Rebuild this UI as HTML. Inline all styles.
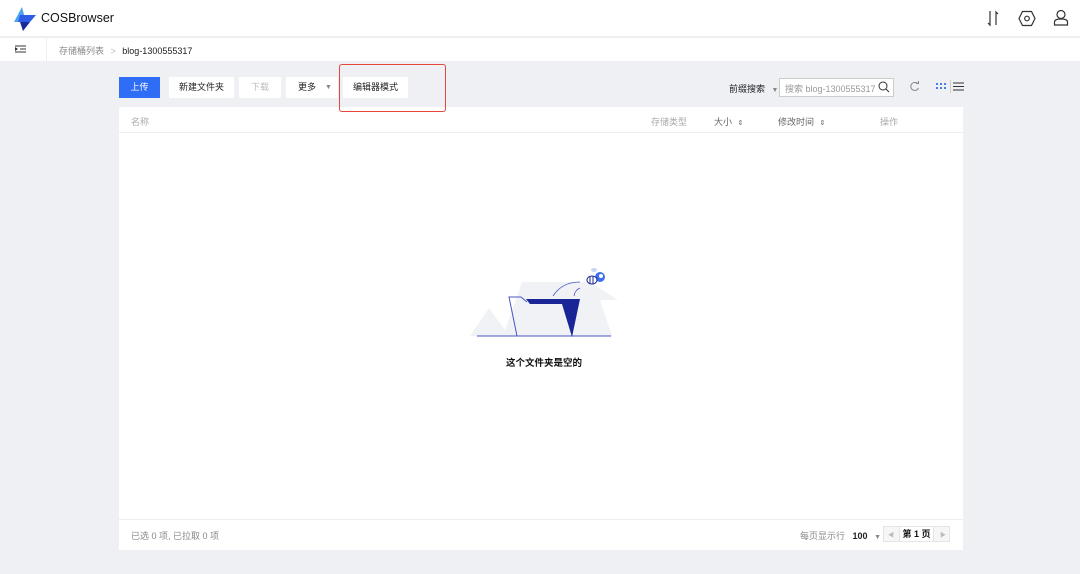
<!DOCTYPE html>
<html><head><meta charset="utf-8"><style>
*{margin:0;padding:0;box-sizing:border-box}
body{width:1080px;height:574px;background:#eef0f4;font-family:"Liberation Sans","Noto Sans CJK SC",sans-serif;font-size:9px;color:#222;position:relative;overflow:hidden}
.a{position:absolute}
.btn{position:absolute;top:77px;height:21px;background:#fff;font-size:9px;line-height:21px;text-align:center;color:#222}
</style></head><body>
<div class="a" style="left:0;top:0;width:1080px;height:37px;background:#fff;border-bottom:1px solid #eee"></div>
<svg class="a" style="left:12px;top:7px" width="26" height="24" viewBox="0 0 26 24"><polygon points="10,0 2,15 14,15" fill="#4aa3f0"/><polygon points="8,8 24,8 18,15 6,15" fill="#2e5ce6"/><polygon points="8,15 18,15 11,24" fill="#1a2a9a"/></svg>
<div class="a" style="left:41px;top:11px;font-size:12.5px;color:#111">COSBrowser</div>
<div class="a" style="left:0;top:38px;width:1080px;height:23px;background:#fff"></div>
<div class="a" style="left:46px;top:38px;width:1px;height:23px;background:#eee"></div>
<svg class="a" style="left:14px;top:44px" width="13" height="10"><path d="M1 2h11M6 5h6M1 8h11" stroke="#333" stroke-width="1"/><polygon points="1,3 4,5 1,7" fill="#333"/></svg>
<div class="a" style="left:59px;top:44px;color:#888">存储桶列表 <span style="color:#bbb;margin:0 4px">&gt;</span> <span style="color:#222">blog-1300555317</span></div>
<div class="btn" style="left:119px;width:41px;background:#2f6df6;color:#fff">上传</div>
<div class="btn" style="left:169px;width:65px">新建文件夹</div>
<div class="btn" style="left:239px;width:42px;color:#bbb">下载</div>
<div class="btn" style="left:286px;width:52px;text-align:left;padding-left:12px">更多<span class="a" style="left:39px;top:0;color:#888;font-size:7px">▼</span></div>
<div class="btn" style="left:343px;width:65px">编辑器模式</div>
<div class="a" style="left:729px;top:82px;color:#222">前缀搜索 <span style="color:#888;font-size:7px;margin-left:4px">▼</span></div>
<div class="a" style="left:779px;top:78px;width:115px;height:19px;background:#fff;border:1px solid #ccc;padding:3px 5px;color:#999">搜索 blog-1300555317</div>
<svg class="a" style="left:878px;top:81px" width="12" height="12"><circle cx="5" cy="5" r="4" fill="none" stroke="#333"/><path d="M8 8l3 3" stroke="#333"/></svg>
<svg class="a" style="left:909px;top:81px" width="11" height="11"><path d="M9 3A4 4 0 1 0 9.5 7" fill="none" stroke="#888"/><path d="M7 2.5h2.5V0" fill="none" stroke="#888"/></svg>
<svg class="a" style="left:936px;top:83px" width="10" height="7"><g fill="#4a7cf0"><rect x="0" y="0" width="2" height="2"/><rect x="4" y="0" width="2" height="2"/><rect x="8" y="0" width="2" height="2"/><rect x="0" y="4" width="2" height="2"/><rect x="4" y="4" width="2" height="2"/><rect x="8" y="4" width="2" height="2"/></g></svg>
<div class="a" style="left:950px;top:80px;width:1px;height:13px;background:#ccc"></div>
<svg class="a" style="left:953px;top:82px" width="11" height="9"><path d="M0 1h11M0 4.5h11M0 8h11" stroke="#333"/></svg>
<svg class="a" style="left:986px;top:10px" width="14" height="17"><path d="M4 1v14l-2-2M10 15V2l2 2" fill="none" stroke="#333" stroke-width="1.2"/></svg>
<svg class="a" style="left:1018px;top:10px" width="18" height="17"><polygon points="4.5,1.5 13.5,1.5 17,8.5 13.5,15.5 4.5,15.5 1,8.5" fill="none" stroke="#333" stroke-width="1.2"/><circle cx="9" cy="8.5" r="2.3" fill="none" stroke="#333" stroke-width="1.2"/></svg>
<svg class="a" style="left:1053px;top:9px" width="16" height="17"><circle cx="8" cy="5.5" r="4" fill="none" stroke="#333" stroke-width="1.2"/><path d="M1.5 16v-3c0-2 2-3 6.5-3s6.5 1 6.5 3v3z" fill="none" stroke="#333" stroke-width="1.2"/></svg>
<div class="a" style="left:119px;top:107px;width:844px;height:443px;background:#fff"></div>
<div class="a" style="left:339px;top:64px;width:107px;height:48px;border:1.5px solid #e5483a;border-radius:3px;z-index:5"></div>
<div class="a" style="left:119px;top:132px;width:844px;height:1px;background:#eee"></div>
<div class="a" style="left:119px;top:519px;width:844px;height:1px;background:#eee"></div>
<div class="a" style="left:131px;top:115px;color:#aaa">名称</div>
<div class="a" style="left:651px;top:115px;color:#aaa">存储类型</div>
<div class="a" style="left:714px;top:115px;color:#666">大小 <span style="font-size:7px;margin-left:3px">⇕</span></div>
<div class="a" style="left:778px;top:115px;color:#666">修改时间 <span style="font-size:7px;margin-left:3px">⇕</span></div>
<div class="a" style="left:880px;top:115px;color:#aaa">操作</div>
<svg class="a" style="left:460px;top:260px" width="170" height="85" viewBox="460 260 170 85">
<polygon points="470,336 489,308 505,330 522,282 590,282 618,300 600,300 612,336" fill="#f0f2f6"/>
<path d="M477 336H611" stroke="#4b55c4" stroke-width="1"/>
<path d="M517 336L509 297H521L527 302" fill="none" stroke="#4b55c4" stroke-width="1"/>
<polygon points="526,299 580,299 572,337 562,304 530,304" fill="#1a2596"/>
<path d="M553 296Q562 282 580 282M574 296Q575 290 580 288" fill="none" stroke="#4b55c4" stroke-width="0.8"/>
<circle cx="600" cy="277" r="5" fill="#3a6ff0"/><circle cx="601" cy="276" r="2" fill="#fff"/>
<ellipse cx="592" cy="280" rx="5" ry="4" fill="#fff" stroke="#1a2596"/><path d="M590 276v8M593 276v8" stroke="#1a2596"/>
<ellipse cx="594" cy="270" rx="3" ry="2" fill="#c7d6fa"/>
</svg>
<div class="a" style="left:0;top:355px;width:1080px;text-align:center;font-size:9.5px;font-weight:bold;color:#111;padding-left:8px">这个文件夹是空的</div>
<div class="a" style="left:131px;top:529px;color:#888">已选 0 项, 已拉取 0 项</div>
<div class="a" style="left:800px;top:529px;color:#888">每页显示行 <span style="color:#222;font-weight:bold;margin-left:5px">100</span> <span style="font-size:7px;margin-left:4px">▼</span></div>
<div class="a" style="left:883px;top:526px;width:67px;height:16px;border:1px solid #e5e5e5;background:#f6f6f6"></div>
<div class="a" style="left:899px;top:526px;width:35px;height:16px;background:#fff;border:1px solid #e5e5e5;text-align:center;line-height:14px;font-weight:bold;color:#111">第 1 页</div>
<div class="a" style="left:888px;top:530px;color:#bbb;font-size:6px">◀</div>
<div class="a" style="left:940px;top:530px;color:#bbb;font-size:6px">▶</div>
</body></html>
